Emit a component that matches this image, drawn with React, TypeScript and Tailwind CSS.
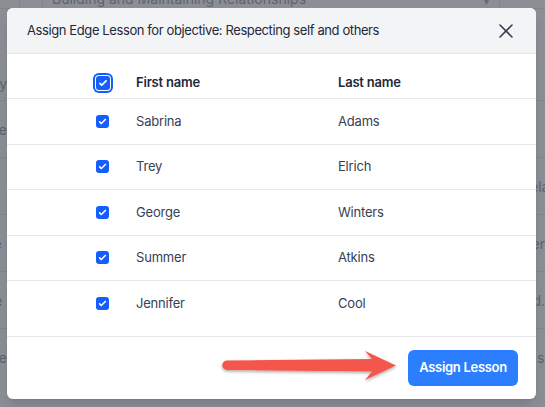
import React from 'react';
import { X } from 'lucide-react';

const students = [
  { first: 'Sabrina', last: 'Adams' },
  { first: 'Trey', last: 'Elrich' },
  { first: 'George', last: 'Winters' },
  { first: 'Summer', last: 'Atkins' },
  { first: 'Jennifer', last: 'Cool' },
];

// slivers of the page behind the dialog
const pageRows = [
  { left: 'Practice', right: '' },
  { left: 'Practice', right: 'ela' },
  { left: 'Practice', right: 'er' },
  { left: 'Practice', right: 'd.' },
  { left: 'Practice', right: 's' },
];

const CheckMark = () => (
  <svg viewBox="0 0 16 16" className="h-full w-full" fill="white">
    <path d="M12.207 4.793a1 1 0 010 1.414l-5 5a1 1 0 01-1.414 0l-2-2a1 1 0 011.414-1.414L6.5 9.086l4.293-4.293a1 1 0 011.414 0z" />
  </svg>
);

const Checkbox = ({ focused = false }: { focused?: boolean }) =>
  focused ? (
    <span className="flex h-[14px] w-[14px] rounded-[3px] bg-blue-600 ring-2 ring-blue-600 ring-offset-1">
      <CheckMark />
    </span>
  ) : (
    <span className="flex h-[13px] w-[13px] rounded-[3px] bg-blue-600">
      <CheckMark />
    </span>
  );

const Arrow = () => (
  <svg
    className="pointer-events-none absolute left-[213px] top-[344px]"
    width="192"
    height="46"
    viewBox="0 0 192 46"
  >
    <defs>
      <filter id="arrowShadow" x="-10%" y="-30%" width="120%" height="170%">
        <feDropShadow dx="0" dy="1.5" stdDeviation="1.5" floodColor="#000" floodOpacity="0.35" />
      </filter>
    </defs>
    <path
      d="M14 16.5 L159 15 L152 7 L183 21.5 L152 36 L159 27.5 L14 26 A4.75 4.75 0 0 1 14 16.5 Z"
      fill="#f4574b"
      filter="url(#arrowShadow)"
    />
  </svg>
);

export default function App() {
  return (
    <div className="relative h-[407px] w-[545px] overflow-hidden bg-white font-['Inter','Liberation_Sans',sans-serif]">
      {/* page behind */}
      <div className="flex flex-col text-[14px] text-gray-600">
        <div className="flex h-[9px] overflow-hidden border-b border-gray-300">
          <div className="w-[20px] border-r border-gray-300" />
          <div className="w-[23px] border-r border-gray-300" />
          <div className="flex flex-1 items-start pl-[9px]">
            <span className="-mt-[8px] whitespace-nowrap leading-[14px]">Building and Maintaining Relationships</span>
            <span className="ml-auto mr-[10px] -mt-[6px] text-[10px] text-gray-500">▾</span>
          </div>
          <div className="w-[46px] border-l border-gray-300" />
        </div>
        <div className="flex h-[91px] items-end pb-[6px]">
          <div className="flex w-[7px] justify-end overflow-hidden whitespace-nowrap">Category</div>
        </div>
        {pageRows.map((r, i) => (
          <div key={i} className="flex h-[57px] items-center border-t border-gray-300">
            <div className="flex w-[7px] justify-end overflow-hidden whitespace-nowrap">{r.left}</div>
            <div className="ml-[530px] whitespace-nowrap">{r.right}</div>
          </div>
        ))}
      </div>

      {/* overlay */}
      <div className="absolute inset-0 bg-[#646872]/75" />

      {/* dialog */}
      <div className="absolute left-[7px] top-[8px] w-[529px] overflow-hidden rounded-md bg-white shadow-lg">
        <div className="flex h-[46px] items-center justify-between border-b border-gray-200 bg-gray-100 pl-5 pr-[18px]">
          <h2 className="text-[13px] tracking-[-0.4px] text-gray-800">
            Assign Edge Lesson for objective: Respecting self and others
          </h2>
          <X size={24} strokeWidth={1.6} className="text-gray-700" />
        </div>

        <div className="pb-[10px] text-[13px] tracking-[-0.2px] text-gray-700">
          <div className="flex h-[44px] items-center pt-[14px] font-semibold text-gray-800">
            <div className="flex w-[129px] pl-[89px]">
              <Checkbox focused />
            </div>
            <div className="w-[202px]">First name</div>
            <div>Last name</div>
          </div>
          {students.map((s) => (
            <div key={s.first} className="flex h-[45.5px] items-center border-t border-gray-200">
              <div className="flex w-[129px] pl-[89px]">
                <Checkbox />
              </div>
              <div className="w-[202px]">{s.first}</div>
              <div>{s.last}</div>
            </div>
          ))}
        </div>

        <div className="flex justify-end border-t border-gray-200 px-[18px] pb-[13px] pt-[13px]">
          <button className="h-[36px] w-[110px] rounded-md bg-blue-500 text-[13px] font-semibold tracking-[-0.3px] text-white">
            Assign Lesson
          </button>
        </div>
      </div>

      <Arrow />
    </div>
  );
}
